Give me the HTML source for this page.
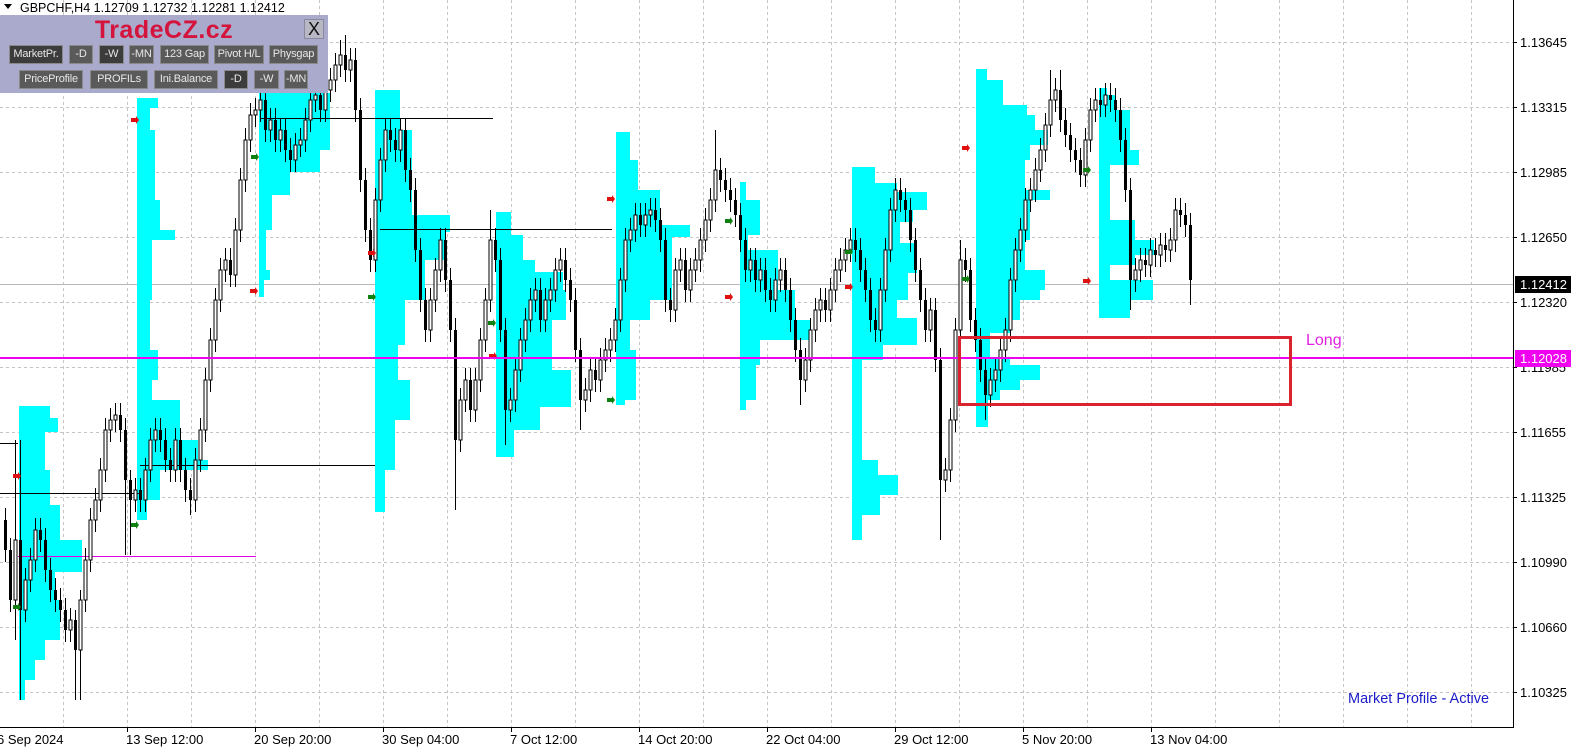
<!DOCTYPE html>
<html><head><meta charset="utf-8"><style>
html,body{margin:0;padding:0;background:#fff;width:1584px;height:755px;overflow:hidden;font-family:"Liberation Sans",sans-serif}
.p{position:absolute;left:0;top:15px;width:328px;height:78px;background:#aaaacc}
.t{position:absolute;left:0;width:328px;top:1px;text-align:center;font-weight:bold;font-size:25px;color:#d4143c;letter-spacing:0.5px}
.x{position:absolute;left:304px;top:4px;width:18px;height:18px;background:#b8b8c4;border:1px solid #8888a0;font-size:18px;line-height:18px;text-align:center;color:#111}
.b{position:absolute;height:19px;background:#5a5a5a;border:1px solid #8a8a8a;box-sizing:border-box;color:#e8e8e8;font-size:11px;line-height:17px;text-align:center;white-space:nowrap;overflow:hidden;letter-spacing:-0.2px}
.d{background:#3c3c3c}
</style></head><body>
<svg width="1584" height="755" style="position:absolute;left:0;top:0" xmlns="http://www.w3.org/2000/svg">
<g stroke="#c4c4c4" stroke-dasharray="3,3" stroke-width="1">
<path d="M63.5 0V727M127.5 0V727M191.5 0V727M255.5 0V727M319.5 0V727M383.5 0V727M447.5 0V727M511.5 0V727M575.5 0V727M639.5 0V727M703.5 0V727M767.5 0V727M831.5 0V727M895.5 0V727M959.5 0V727M1023.5 0V727M1087.5 0V727M1151.5 0V727M1215.5 0V727M1279.5 0V727M1343.5 0V727M1407.5 0V727M1471.5 0V727"/>
<path d="M0 42.5H1513M0 107.5H1513M0 172.5H1513M0 237.5H1513M0 302.5H1513M0 367.5H1513M0 432.5H1513M0 497.5H1513M0 562.5H1513M0 627.5H1513M0 692.5H1513"/>
</g>
<line x1="0" y1="284.5" x2="1513" y2="284.5" stroke="#b8b8b8"/>
<g fill="#00ffff">
<path d="M19 406H50V418H58V432H45V470H50V505H60V540H82V572H55V600H60V640H45V660H35V680H25V700H19Z"/>
<path d="M137 98H158V108H150V130H155V200H160V230H175V240H152V300H150V350H158V380H152V400H180V440H198V460H208V470H160V500H147V520H137Z"/>
<path d="M259 93H330V150H320V172H290V195H272V230H266V270H270V280H264V297H259Z"/>
<path d="M375 90H400V130H412V215H450V232H445V260H425V300H405V345H398V380H410V420H395V470H385V512H375Z"/>
<path d="M496 212H511V235H523V260H535V272H563V290H566V320H552V370H571V407H540V430H514V457H496Z"/>
<path d="M616 132H630V160H638V190H660V225H690V237H672V300H650V320H630V350H636V400H625V405H616Z"/>
<path d="M740 182H746V200H760V235H748V250H778V290H795V320H810V340H760V365H756V400H746V410H740Z"/>
<path d="M852 167H875V183H897V192H927V210H913V222H900V243H917V273H908V300H897V318H917V345H883V360H862V460H878V475H898V495H880V515H862V540H852Z"/>
<path d="M976 69H987V80H1003V105H1027V115H1035V130H1048V145H1030V160H1025V190H1050V200H1030V240H1025V270H1045V290H1040V300H1020V320H1010V333H990V357H1010V365H1040V380H1020V390H1000V400H988V427H976Z"/>
<path d="M1099 88H1107V95H1115V110H1130V150H1139V165H1110V220H1135V240H1154V255H1135V265H1110V280H1153V300H1130V318H1099Z"/>
</g>
<g stroke="#000" stroke-width="1">
<path d="M260 118.5H493M380 229.5H612M140 465.5H375M0 493.5H140M0 443.5H18"/>
</g>
<line x1="18" y1="556.5" x2="256" y2="556.5" stroke="#e000e0"/>
<path fill="none" stroke="#000" stroke-width="1" d="M5.5 508V562M10.5 538V612M15.5 440V640M20.5 440V700M25.5 568V622M30.5 548V592M35.5 518V572M40.5 518V552M45.5 528V582M50.5 558V602M55.5 578V612M60.5 588V622M65.5 598V642M70.5 608V642M75.5 610V700M80.5 590V700M85.5 548V612M90.5 508V572M95.5 488V532M100.5 458V512M105.5 418V482M110.5 408V442M115.5 403V432M120.5 403V442M125.5 418V555M130.5 470V555M135.5 478V512M140.5 478V512M145.5 458V512M150.5 428V482M155.5 418V452M160.5 418V452M165.5 428V472M170.5 448V482M175.5 428V482M180.5 428V482M185.5 458V502M190.5 478V515M195.5 448V512M200.5 418V472M205.5 368V442M210.5 328V392M215.5 288V352M220.5 258V312M225.5 248V282M230.5 248V287M235.5 218V287M240.5 168V242M245.5 128V192M250.5 103V152M255.5 98V127M260.5 88V122M265.5 88V142M270.5 108V142M275.5 108V152M280.5 118V152M285.5 118V162M290.5 138V172M295.5 133V172M300.5 128V157M305.5 108V152M310.5 88V132M315.5 83V112M320.5 83V122M325.5 78V122M330.5 68V102M335.5 53V92M340.5 40V77M345.5 35V82M350.5 48V82M355.5 48V122M360.5 98V192M365.5 168V242M370.5 218V272M375.5 188V272M380.5 148V212M385.5 118V172M390.5 118V152M395.5 128V162M400.5 118V162M405.5 118V182M410.5 158V202M415.5 178V262M420.5 238V312M425.5 288V342M430.5 288V342M435.5 258V312M440.5 228V282M445.5 228V292M450.5 268V342M455.5 318V510M460.5 388V452M465.5 368V412M470.5 368V422M475.5 368V422M480.5 328V392M485.5 288V352M490.5 210V312M495.5 228V272M500.5 248V342M505.5 318V445M510.5 388V422M515.5 358V412M520.5 328V382M525.5 308V352M530.5 288V332M535.5 278V312M540.5 278V332M545.5 288V332M550.5 278V312M555.5 258V302M560.5 248V282M565.5 248V292M570.5 268V312M575.5 288V362M580.5 338V430M585.5 378V412M590.5 358V402M595.5 358V392M600.5 348V392M605.5 338V372M610.5 328V362M615.5 308V352M620.5 268V332M625.5 228V292M630.5 218V252M635.5 203V242M640.5 203V237M645.5 203V237M650.5 198V227M655.5 198V232M660.5 208V252M665.5 228V312M670.5 288V322M675.5 258V322M680.5 248V282M685.5 248V302M690.5 258V302M695.5 248V282M700.5 228V272M705.5 208V252M710.5 188V232M715.5 130V212M720.5 158V192M725.5 168V202M730.5 178V212M735.5 188V227M740.5 203V252M745.5 228V282M750.5 248V282M755.5 248V292M760.5 258V292M765.5 258V302M770.5 278V312M775.5 268V312M780.5 258V292M785.5 258V302M790.5 278V332M795.5 308V362M800.5 338V405M805.5 348V392M810.5 318V372M815.5 298V342M820.5 288V322M825.5 288V322M830.5 278V322M835.5 258V302M840.5 248V282M845.5 238V272M850.5 228V262M855.5 228V262M860.5 238V282M865.5 258V302M870.5 278V332M875.5 308V342M880.5 278V342M885.5 238V302M890.5 198V262M895.5 178V222M900.5 178V212M905.5 188V222M910.5 198V252M915.5 228V282M920.5 258V312M925.5 288V342M930.5 298V342M935.5 298V372M940.5 348V540M945.5 458V492M950.5 408V482M955.5 318V432M960.5 240V342M965.5 248V282M970.5 258V332M975.5 308V352M980.5 328V382M985.5 358V420M990.5 368V407M995.5 358V392M1000.5 338V382M1005.5 318V362M1010.5 268V342M1015.5 238V292M1020.5 218V262M1025.5 188V242M1030.5 178V212M1035.5 158V202M1040.5 138V182M1045.5 113V162M1050.5 70V137M1055.5 78V112M1060.5 70V132M1065.5 108V147M1070.5 123V162M1075.5 138V172M1080.5 148V187M1085.5 128V187M1090.5 98V152M1095.5 88V122M1100.5 88V117M1105.5 83V117M1110.5 83V112M1115.5 88V122M1120.5 98V152M1125.5 128V202M1130.5 178V310M1135.5 258V292M1140.5 248V282M1145.5 248V277M1150.5 238V277M1155.5 238V267M1160.5 233V267M1165.5 233V262M1170.5 228V262M1175.5 198V252M1180.5 198V227M1185.5 203V237M1190.5 213V305"/>
<path fill="#000" d="M4 520h3v30h-3zM9 550h3v50h-3zM19 540h3v70h-3zM39 530h3v10h-3zM44 540h3v30h-3zM49 570h3v20h-3zM54 590h3v10h-3zM59 600h3v10h-3zM64 610h3v20h-3zM74 620h3v30h-3zM119 415h3v15h-3zM124 430h3v50h-3zM129 480h3v20h-3zM139 490h3v10h-3zM159 430h3v10h-3zM164 440h3v20h-3zM169 460h3v10h-3zM179 440h3v30h-3zM184 470h3v20h-3zM189 490h3v10h-3zM229 260h3v15h-3zM264 100h3v30h-3zM274 120h3v20h-3zM284 130h3v20h-3zM289 150h3v10h-3zM319 95h3v15h-3zM344 55h3v15h-3zM354 60h3v50h-3zM359 110h3v70h-3zM364 180h3v50h-3zM369 230h3v30h-3zM389 130h3v10h-3zM394 140h3v10h-3zM404 130h3v40h-3zM409 170h3v20h-3zM414 190h3v60h-3zM419 250h3v50h-3zM424 300h3v30h-3zM444 240h3v40h-3zM449 280h3v50h-3zM454 330h3v110h-3zM469 380h3v30h-3zM494 240h3v20h-3zM499 260h3v70h-3zM504 330h3v80h-3zM539 290h3v30h-3zM564 260h3v20h-3zM569 280h3v20h-3zM574 300h3v50h-3zM579 350h3v50h-3zM594 370h3v10h-3zM639 215h3v10h-3zM654 210h3v10h-3zM659 220h3v20h-3zM664 240h3v60h-3zM669 300h3v10h-3zM684 260h3v30h-3zM719 170h3v10h-3zM724 180h3v10h-3zM729 190h3v10h-3zM734 200h3v15h-3zM739 215h3v25h-3zM744 240h3v30h-3zM754 260h3v20h-3zM764 270h3v20h-3zM769 290h3v10h-3zM784 270h3v20h-3zM789 290h3v30h-3zM794 320h3v30h-3zM799 350h3v30h-3zM824 300h3v10h-3zM854 240h3v10h-3zM859 250h3v20h-3zM864 270h3v20h-3zM869 290h3v30h-3zM874 320h3v10h-3zM899 190h3v10h-3zM904 200h3v10h-3zM909 210h3v30h-3zM914 240h3v30h-3zM919 270h3v30h-3zM924 300h3v30h-3zM934 310h3v50h-3zM939 360h3v120h-3zM964 260h3v10h-3zM969 270h3v50h-3zM974 320h3v20h-3zM979 340h3v30h-3zM984 370h3v25h-3zM1059 90h3v30h-3zM1064 120h3v15h-3zM1069 135h3v15h-3zM1074 150h3v10h-3zM1079 160h3v15h-3zM1099 100h3v5h-3zM1109 95h3v5h-3zM1114 100h3v10h-3zM1119 110h3v30h-3zM1124 140h3v50h-3zM1129 190h3v90h-3zM1144 260h3v5h-3zM1154 250h3v5h-3zM1164 245h3v5h-3zM1179 210h3v5h-3zM1184 215h3v10h-3zM1189 225h3v55h-3z"/>
<g fill="#fff" stroke="#000" stroke-width="1">
<path d="M14 540h3v60h-3zM24 580h3v30h-3zM29 560h3v20h-3zM34 530h3v30h-3zM69 620h3v10h-3zM79 600h3v50h-3zM84 560h3v40h-3zM89 520h3v40h-3zM94 500h3v20h-3zM99 470h3v30h-3zM104 430h3v40h-3zM109 420h3v10h-3zM114 415h3v5h-3zM134 490h3v10h-3zM144 470h3v30h-3zM149 440h3v30h-3zM154 430h3v10h-3zM174 440h3v30h-3zM194 460h3v40h-3zM199 430h3v30h-3zM204 380h3v50h-3zM209 340h3v40h-3zM214 300h3v40h-3zM219 270h3v30h-3zM224 260h3v10h-3zM234 230h3v45h-3zM239 180h3v50h-3zM244 140h3v40h-3zM249 115h3v25h-3zM254 110h3v5h-3zM259 100h3v10h-3zM269 120h3v10h-3zM279 130h3v10h-3zM294 145h3v15h-3zM299 140h3v5h-3zM304 120h3v20h-3zM309 100h3v20h-3zM314 95h3v5h-3zM324 90h3v20h-3zM329 80h3v10h-3zM334 65h3v15h-3zM339 55h3v10h-3zM349 60h3v10h-3zM374 200h3v60h-3zM379 160h3v40h-3zM384 130h3v30h-3zM399 130h3v20h-3zM429 300h3v30h-3zM434 270h3v30h-3zM439 240h3v30h-3zM459 400h3v40h-3zM464 380h3v20h-3zM474 380h3v30h-3zM479 340h3v40h-3zM484 300h3v40h-3zM489 240h3v60h-3zM509 400h3v10h-3zM514 370h3v30h-3zM519 340h3v30h-3zM524 320h3v20h-3zM529 300h3v20h-3zM534 290h3v10h-3zM544 300h3v20h-3zM549 290h3v10h-3zM554 270h3v20h-3zM559 260h3v10h-3zM584 390h3v10h-3zM589 370h3v20h-3zM599 360h3v20h-3zM604 350h3v10h-3zM609 340h3v10h-3zM614 320h3v20h-3zM619 280h3v40h-3zM624 240h3v40h-3zM629 230h3v10h-3zM634 215h3v15h-3zM644 215h3v10h-3zM649 210h3v5h-3zM674 270h3v40h-3zM679 260h3v10h-3zM689 270h3v20h-3zM694 260h3v10h-3zM699 240h3v20h-3zM704 220h3v20h-3zM709 200h3v20h-3zM714 170h3v30h-3zM749 260h3v10h-3zM759 270h3v10h-3zM774 280h3v20h-3zM779 270h3v10h-3zM804 360h3v20h-3zM809 330h3v30h-3zM814 310h3v20h-3zM819 300h3v10h-3zM829 290h3v20h-3zM834 270h3v20h-3zM839 260h3v10h-3zM844 250h3v10h-3zM849 240h3v10h-3zM879 290h3v40h-3zM884 250h3v40h-3zM889 210h3v40h-3zM894 190h3v20h-3zM929 310h3v20h-3zM944 470h3v10h-3zM949 420h3v50h-3zM954 330h3v90h-3zM959 260h3v70h-3zM989 380h3v15h-3zM994 370h3v10h-3zM999 350h3v20h-3zM1004 330h3v20h-3zM1009 280h3v50h-3zM1014 250h3v30h-3zM1019 230h3v20h-3zM1024 200h3v30h-3zM1029 190h3v10h-3zM1034 170h3v20h-3zM1039 150h3v20h-3zM1044 125h3v25h-3zM1049 100h3v25h-3zM1054 90h3v10h-3zM1084 140h3v35h-3zM1089 110h3v30h-3zM1094 100h3v10h-3zM1104 95h3v10h-3zM1134 270h3v10h-3zM1139 260h3v10h-3zM1149 250h3v15h-3zM1159 245h3v10h-3zM1169 240h3v10h-3zM1174 210h3v30h-3z"/>
</g>
<g fill="#e01010"><path d="M13 474h5v-2l3 4-3 4v-2h-5zM131 118h5v-2l3 4-3 4v-2h-5zM250 289h5v-2l3 4-3 4v-2h-5zM368 251h5v-2l3 4-3 4v-2h-5zM489 354h5v-2l3 4-3 4v-2h-5zM607 197h5v-2l3 4-3 4v-2h-5zM725 295h5v-2l3 4-3 4v-2h-5zM845 285h5v-2l3 4-3 4v-2h-5zM962 146h5v-2l3 4-3 4v-2h-5zM1083 279h5v-2l3 4-3 4v-2h-5z"/></g>
<g fill="#108010"><path d="M13 605h5v-2l3 4-3 4v-2h-5zM131 523h5v-2l3 4-3 4v-2h-5zM251 155h5v-2l3 4-3 4v-2h-5zM368 295h5v-2l3 4-3 4v-2h-5zM488 321h5v-2l3 4-3 4v-2h-5zM607 398h5v-2l3 4-3 4v-2h-5zM725 219h5v-2l3 4-3 4v-2h-5zM845 250h5v-2l3 4-3 4v-2h-5zM962 277h5v-2l3 4-3 4v-2h-5zM1083 168h5v-2l3 4-3 4v-2h-5z"/></g>
<line x1="0" y1="358" x2="1513" y2="358" stroke="#f000f0" stroke-width="2"/>
<rect x="959.5" y="337.5" width="331" height="67" fill="none" stroke="#d9232e" stroke-width="3"/>
<text x="1306" y="345" font-family="Liberation Sans" font-size="16" fill="#e020e0">Long</text>
<text x="1348" y="703" font-family="Liberation Sans" font-size="14.5" fill="#1a1ac8">Market Profile - Active</text>
<path d="M1513.5 0V727.5H0" fill="none" stroke="#000" stroke-width="1"/>
<g stroke="#000"><path d="M1513 42.5h4M1513 107.5h4M1513 172.5h4M1513 237.5h4M1513 302.5h4M1513 367.5h4M1513 432.5h4M1513 497.5h4M1513 562.5h4M1513 627.5h4M1513 692.5h4M127.5 727v5M255.5 727v5M383.5 727v5M511.5 727v5M639.5 727v5M767.5 727v5M895.5 727v5M1023.5 727v5M1151.5 727v5"/></g>
<g font-family="Liberation Sans" font-size="13" fill="#000">
<text x="1520" y="47">1.13645</text><text x="1520" y="112">1.13315</text><text x="1520" y="177">1.12985</text><text x="1520" y="242">1.12650</text><text x="1520" y="307">1.12320</text><text x="1520" y="372">1.11985</text><text x="1520" y="437">1.11655</text><text x="1520" y="502">1.11325</text><text x="1520" y="567">1.10990</text><text x="1520" y="632">1.10660</text><text x="1520" y="697">1.10325</text>
<text x="-3" y="744">6 Sep 2024</text><text x="126" y="744">13 Sep 12:00</text><text x="254" y="744">20 Sep 20:00</text><text x="382" y="744">30 Sep 04:00</text><text x="510" y="744">7 Oct 12:00</text><text x="638" y="744">14 Oct 20:00</text><text x="766" y="744">22 Oct 04:00</text><text x="894" y="744">29 Oct 12:00</text><text x="1022" y="744">5 Nov 20:00</text><text x="1150" y="744">13 Nov 04:00</text>
</g>
<rect x="1515" y="276" width="56" height="17" fill="#000"/>
<text x="1520" y="289" font-family="Liberation Sans" font-size="13" fill="#fff">1.12412</text>
<rect x="1515" y="350" width="56" height="17" fill="#f000f0"/>
<text x="1520" y="363" font-family="Liberation Sans" font-size="13" fill="#fff">1.12028</text>
<path d="M4 4h8l-4 5z" fill="#000"/>
<text x="20" y="12" font-family="Liberation Sans" font-size="12.5" fill="#000">GBPCHF,H4  1.12709 1.12732 1.12281 1.12412</text>
</svg>
<div class="p">
<div class="t">TradeCZ.cz</div>
<div class="x">X</div>
<div class="b d" style="left:9px;top:30px;width:54px">MarketPr.</div>
<div class="b" style="left:69px;top:30px;width:24px">-D</div>
<div class="b d" style="left:99px;top:30px;width:25px">-W</div>
<div class="b" style="left:129px;top:30px;width:25px">-MN</div>
<div class="b" style="left:160px;top:30px;width:49px">123 Gap</div>
<div class="b" style="left:214px;top:30px;width:50px">Pivot H/L</div>
<div class="b" style="left:269px;top:30px;width:49px">Physgap</div>
<div class="b" style="left:19px;top:55px;width:64px">PriceProfile</div>
<div class="b" style="left:90px;top:55px;width:58px">PROFILs</div>
<div class="b" style="left:154px;top:55px;width:64px">Ini.Balance</div>
<div class="b d" style="left:224px;top:55px;width:24px">-D</div>
<div class="b" style="left:254px;top:55px;width:25px">-W</div>
<div class="b" style="left:284px;top:55px;width:24px">-MN</div>
</div>
</body></html>
